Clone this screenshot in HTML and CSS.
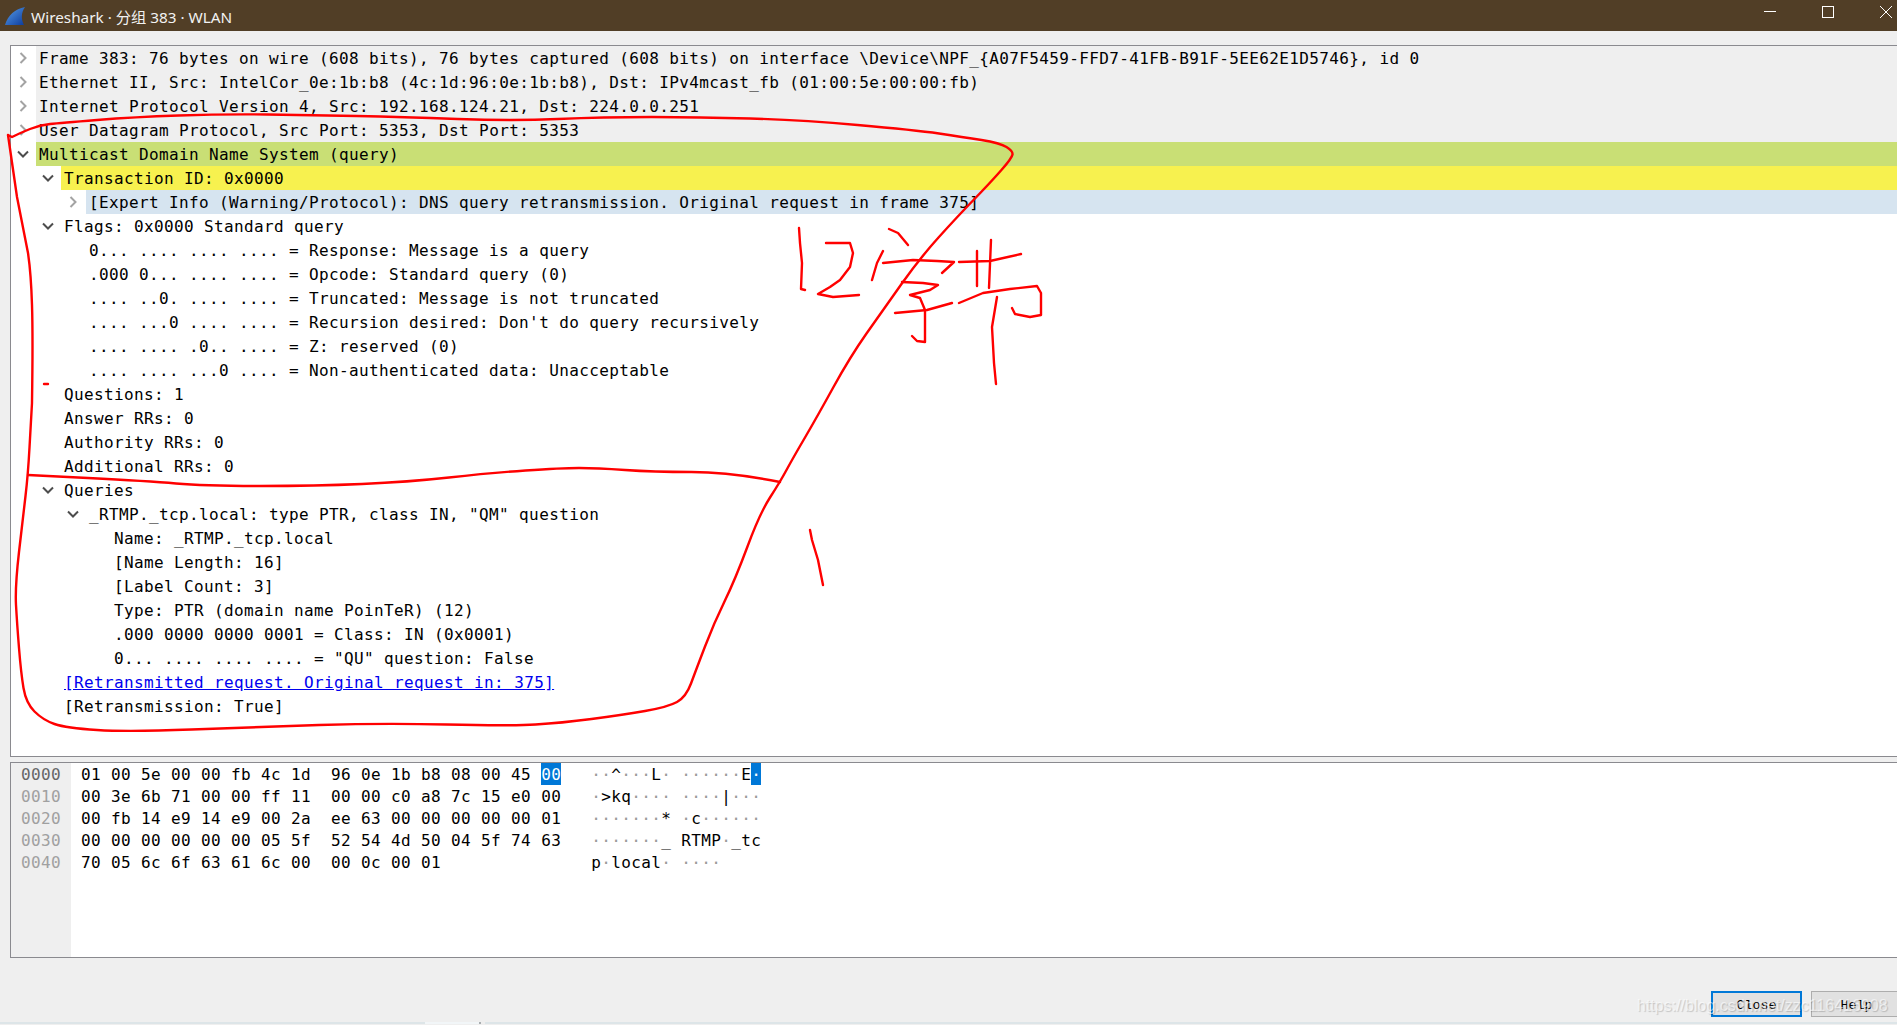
FILE: index.html
```html
<!DOCTYPE html>
<html lang="en">
<head>
    <meta charset="UTF-8">
    <title>Wireshark · 分组 383 · WLAN</title>
    <link rel="stylesheet" href="styles.css">
</head>
<body>
    <svg width="0" height="0" class="defs">
        <defs>
            <symbol id="closed" viewBox="0 0 12 12"><path d="M3.5 1L8.5 6L3.5 11" fill="none" stroke="#a3a3a3" stroke-width="2"/></symbol>
            <symbol id="open" viewBox="0 0 12 12"><path d="M1 3.5L6 8.5L11 3.5" fill="none" stroke="#4d4d4d" stroke-width="2"/></symbol>
            <linearGradient id="fin" x1="0" y1="0" x2="1" y2="1">
                <stop offset="0" stop-color="#5aa0ea"/>
                <stop offset="1" stop-color="#0b3a9c"/>
            </linearGradient>
        </defs>
    </svg>

    <header class="titlebar">
        <svg class="fin" width="20" height="20" viewBox="0 0 20 20"><path d="M0 19C3 9 10 3 20 1C16 7 16 13 19 19Z" fill="url(#fin)"/></svg>
        <span class="title">Wireshark · 分组 383 · WLAN</span>
        <div class="winbtns">
            <svg width="12" height="12" viewBox="0 0 12 12"><path d="M0 5.5H12" stroke="#fff" fill="none"/></svg>
            <svg width="12" height="12" viewBox="0 0 12 12"><rect x=".5" y=".5" width="11" height="11" stroke="#fff" fill="none"/></svg>
            <svg width="12" height="12" viewBox="0 0 12 12"><path d="M0 0L12 12M12 0L0 12" stroke="#fff" fill="none"/></svg>
        </div>
    </header>

    <section class="tree">
        <div class="row gray"><span class="twisty"><svg width="12" height="12"><use href="#closed"/></svg></span><span class="label">Frame 383: 76 bytes on wire (608 bits), 76 bytes captured (608 bits) on interface \Device\NPF_{A07F5459-FFD7-41FB-B91F-5EE62E1D5746}, id 0</span></div>
        <div class="row gray"><span class="twisty"><svg width="12" height="12"><use href="#closed"/></svg></span><span class="label">Ethernet II, Src: IntelCor_0e:1b:b8 (4c:1d:96:0e:1b:b8), Dst: IPv4mcast_fb (01:00:5e:00:00:fb)</span></div>
        <div class="row gray"><span class="twisty"><svg width="12" height="12"><use href="#closed"/></svg></span><span class="label">Internet Protocol Version 4, Src: 192.168.124.21, Dst: 224.0.0.251</span></div>
        <div class="row gray"><span class="twisty"><svg width="12" height="12"><use href="#closed"/></svg></span><span class="label">User Datagram Protocol, Src Port: 5353, Dst Port: 5353</span></div>
        <div class="row green"><span class="twisty"><svg width="12" height="12"><use href="#open"/></svg></span><span class="label">Multicast Domain Name System (query)</span></div>
        <div class="row lvl1 yellow"><span class="twisty"><svg width="12" height="12"><use href="#open"/></svg></span><span class="label">Transaction ID: 0x0000</span></div>
        <div class="row lvl2 blue"><span class="twisty"><svg width="12" height="12"><use href="#closed"/></svg></span><span class="label">[Expert Info (Warning/Protocol): DNS query retransmission. Original request in frame 375]</span></div>
        <div class="row lvl1"><span class="twisty"><svg width="12" height="12"><use href="#open"/></svg></span><span class="label">Flags: 0x0000 Standard query</span></div>
        <div class="row lvl2"><span class="twisty"></span><span class="label">0... .... .... .... = Response: Message is a query</span></div>
        <div class="row lvl2"><span class="twisty"></span><span class="label">.000 0... .... .... = Opcode: Standard query (0)</span></div>
        <div class="row lvl2"><span class="twisty"></span><span class="label">.... ..0. .... .... = Truncated: Message is not truncated</span></div>
        <div class="row lvl2"><span class="twisty"></span><span class="label">.... ...0 .... .... = Recursion desired: Don't do query recursively</span></div>
        <div class="row lvl2"><span class="twisty"></span><span class="label">.... .... .0.. .... = Z: reserved (0)</span></div>
        <div class="row lvl2"><span class="twisty"></span><span class="label">.... .... ...0 .... = Non-authenticated data: Unacceptable</span></div>
        <div class="row lvl1"><span class="twisty"></span><span class="label">Questions: 1</span></div>
        <div class="row lvl1"><span class="twisty"></span><span class="label">Answer RRs: 0</span></div>
        <div class="row lvl1"><span class="twisty"></span><span class="label">Authority RRs: 0</span></div>
        <div class="row lvl1"><span class="twisty"></span><span class="label">Additional RRs: 0</span></div>
        <div class="row lvl1"><span class="twisty"><svg width="12" height="12"><use href="#open"/></svg></span><span class="label">Queries</span></div>
        <div class="row lvl2"><span class="twisty"><svg width="12" height="12"><use href="#open"/></svg></span><span class="label">_RTMP._tcp.local: type PTR, class IN, "QM" question</span></div>
        <div class="row lvl3"><span class="twisty"></span><span class="label">Name: _RTMP._tcp.local</span></div>
        <div class="row lvl3"><span class="twisty"></span><span class="label">[Name Length: 16]</span></div>
        <div class="row lvl3"><span class="twisty"></span><span class="label">[Label Count: 3]</span></div>
        <div class="row lvl3"><span class="twisty"></span><span class="label">Type: PTR (domain name PoinTeR) (12)</span></div>
        <div class="row lvl3"><span class="twisty"></span><span class="label">.000 0000 0000 0001 = Class: IN (0x0001)</span></div>
        <div class="row lvl3"><span class="twisty"></span><span class="label">0... .... .... .... = "QU" question: False</span></div>
        <div class="row lvl1"><span class="twisty"></span><span class="label"><a class="link" href="#">[Retransmitted request. Original request in: 375]</a></span></div>
        <div class="row lvl1"><span class="twisty"></span><span class="label">[Retransmission: True]</span></div>
    </section>

    <section class="bytes">
        <div class="offsets">
            <div class="line first">0000</div>
            <div class="line">0010</div>
            <div class="line">0020</div>
            <div class="line">0030</div>
            <div class="line">0040</div>
        </div>
        <div class="dump">
            <div class="line">01 00 5e 00 00 fb 4c 1d  96 0e 1b b8 08 00 45 <span class="sel">00</span>   <i>··</i>^<i>···</i>L<i>·</i> <i>······</i>E<span class="sel">·</span></div>
            <div class="line">00 3e 6b 71 00 00 ff 11  00 00 c0 a8 7c 15 e0 00   <i>·</i>&gt;kq<i>····</i> <i>····</i>|<i>···</i></div>
            <div class="line">00 fb 14 e9 14 e9 00 2a  ee 63 00 00 00 00 00 01   <i>·······</i>* <i>·</i>c<i>······</i></div>
            <div class="line">00 00 00 00 00 00 05 5f  52 54 4d 50 04 5f 74 63   <i>·······</i>_ RTMP<i>·</i>_tc</div>
            <div class="line">70 05 6c 6f 63 61 6c 00  00 0c 00 01               p<i>·</i>local<i>·</i> <i>····</i></div>
        </div>
    </section>

    <footer class="actions">
        <button class="btn default">Close</button>
        <button class="btn">Help</button>
    </footer>
    <div class="taskstrip"><span class="seg wide"></span><span class="seg lit"></span><span class="seg rest"></span></div>

    <svg class="ink" width="1897" height="1025" viewBox="0 0 1897 1025" fill="none" stroke="#f00" stroke-width="2.4" stroke-linejoin="round" stroke-linecap="round">
        <path d="M8 135L12 137Q20 133 30 129Q40 125 50 124Q60 123 97 120Q134 117 178.5 115.5Q223 114 267.5 114.5Q312 115 357 116Q402 117 457.5 119Q513 121 558 119Q603 117 651.5 117Q700 117 750 118.5Q800 120 857.5 125Q915 130 939 133.5Q963 137 981.5 140Q1000 143 1006.5 147Q1013 151 1012.5 154.5Q1012 158 1001 170.5Q990 183 973.5 200Q957 217 938.5 237.5Q920 258 901.5 284Q883 310 866.5 333.5Q850 357 833.5 387Q817 417 805 437.5Q793 458 786.5 470Q780 482 770 497.5Q760 513 747.5 546.5Q735 580 724.5 601.5Q714 623 705 646.5Q696 670 691 683.5Q686 697 677 702Q668 707 645 711Q622 715 591.5 719Q561 723 535.5 724.5Q510 726 446.5 724.5Q383 723 319 725Q255 727 191.5 729.5Q128 732 97 730Q66 728 54.5 724Q43 720 34.5 711.5Q26 703 23.5 688Q21 673 19 648Q17 623 16 605Q15 587 19 552Q23 517 25.5 496Q28 475 29.5 447.5Q31 420 32 403Q33 337 32 305Q31 273 28 253L17 197L8 135"/>
        <path d="M28 475L88 478Q148 481 176 483.5Q204 486 260 486Q316 486 362 484Q408 482 449 477.5Q490 473 525.5 470.5Q561 468 579 468Q597 468 625 470Q653 472 691.5 472Q730 472 780 482"/>
        <path d="M44 384L48 384"/>
        <path d="M799 228L800 243L802 263L801 289L805 290"/>
        <path d="M826 243L850 243L853 253L850 267L840 280L830 287L818 294L833 297L859 295"/>
        <path d="M889 229L898 233L908 245"/>
        <path d="M883 251L877 263L872 280"/>
        <path d="M883 263L913 260L937 261L954 262L942 273"/>
        <path d="M902 282L923 283L938 285L930 290L910 295L920 298L925 310L925 342L917 341L912 336"/>
        <path d="M895 313L927 310L952 303"/>
        <path d="M959 262L990 261L1021 254"/>
        <path d="M977 251L977 286"/>
        <path d="M991 240L989 288"/>
        <path d="M959 303L983 293L1010 289L1037 286L1041 293L1041 315L1030 317L1015 314L1012 308"/>
        <path d="M997 297L992 327L994 363L996 384"/>
        <path d="M810 530L812 540L818 560L823 585"/>
    </svg>
    <div class="watermark">https://blog.csdn.net/zzc116416908</div>
</body>
</html>
```

FILE: styles.css
```css
* {
    box-sizing: border-box;
}
html, body {
    margin: 0;
    width: 1897px;
    height: 1025px;
    overflow: hidden;
}
body {
    position: relative;
    background: #efefef;
    font-family: "DejaVu Sans Mono", "Liberation Mono", monospace;
    font-size: 16px;
    letter-spacing: 0.37px;
    color: #000;
}
.defs {
    position: absolute;
}

/* title bar */
.titlebar {
    height: 31px;
    background: #513e26;
    display: flex;
    align-items: center;
    padding-left: 5px;
}
.title {
    margin-left: 6px;
    color: #f2f2f2;
    font-family: "Noto Sans", "Noto Sans CJK SC", sans-serif;
    font-size: 15.3px;
    letter-spacing: 0;
}
.winbtns {
    margin-left: auto;
    display: flex;
    gap: 46px;
    padding-right: 5px;
    margin-top: -7px;
}

/* packet tree */
.tree {
    margin: 14px 0 0 10px;
    height: 712px;
    background: #fff;
    border: 1px solid #8a8a8f;
    border-right: none;
}
.row {
    height: 24px;
    display: flex;
    align-items: center;
    white-space: pre;
}
.lvl1 { padding-left: 25px; }
.lvl2 { padding-left: 50px; }
.lvl3 { padding-left: 75px; }
.twisty {
    width: 25px;
    flex: none;
    display: flex;
    justify-content: center;
    align-items: center;
    padding-right: 2px;
}
.label {
    flex: 1;
    height: 24px;
    line-height: 24px;
    padding: 1px 0 0 3px;
}
.gray .label { background: #efefef; }
.green .label { background: #c9df75; }
.yellow .label { background: #f7f14f; }
.blue .label { background: #d6e4f0; }
.link {
    color: #0000ee;
}

/* hex dump */
.bytes {
    margin: 5px 0 0 10px;
    height: 196px;
    display: flex;
    background: #fff;
    border: 1px solid #8a8a8f;
    border-right: none;
}
.offsets {
    width: 60px;
    flex: none;
    background: #efefef;
    padding-left: 10px;
    color: #a0a0a0;
}
.offsets .first {
    color: #666;
}
.dump {
    padding-left: 10px;
}
.line {
    height: 22px;
    line-height: 22px;
    padding-top: 1px;
    white-space: pre;
}
.dump i {
    font-style: normal;
    color: #9a9a9a;
}
.sel {
    display: inline-block;
    height: 22px;
    margin-top: -1px;
    padding-top: 1px;
    vertical-align: top;
    background: #0078d7;
    color: #fff;
}

/* buttons */
.actions {
    margin-top: 33px;
    display: flex;
    gap: 9px;
    padding-left: 1711px;
}
.btn {
    width: 91px;
    height: 26px;
    flex: none;
    padding: 2px 0 0;
    background: #e1e1e1;
    border: 1px solid #adadad;
    font-family: "Liberation Mono", monospace;
    font-size: 13.3px;
    letter-spacing: 0;
    color: #000;
}
.btn.default {
    border: 2px solid #0078d7;
}
.taskstrip {
    margin-top: 5px;
    height: 2px;
    display: flex;
}
.seg.wide { width: 425px; background: #dde5e8; }
.seg.lit { width: 56px; background: #f2f6f8; border-right: 2px solid #a8adb0; }
.seg.rest { flex: 1; background: #dde5e8; margin-left: 4px; }

/* overlays */
.ink {
    position: absolute;
    left: 0;
    top: 0;
    pointer-events: none;
}
.watermark {
    position: absolute;
    left: 1637px;
    top: 997px;
    font-family: "Liberation Sans", sans-serif;
    font-size: 16px;
    letter-spacing: 0;
    color: rgba(255, 255, 255, 0.6);
    text-shadow: 1px 1px 1px rgba(0, 0, 0, 0.18);
    white-space: nowrap;
}
```
